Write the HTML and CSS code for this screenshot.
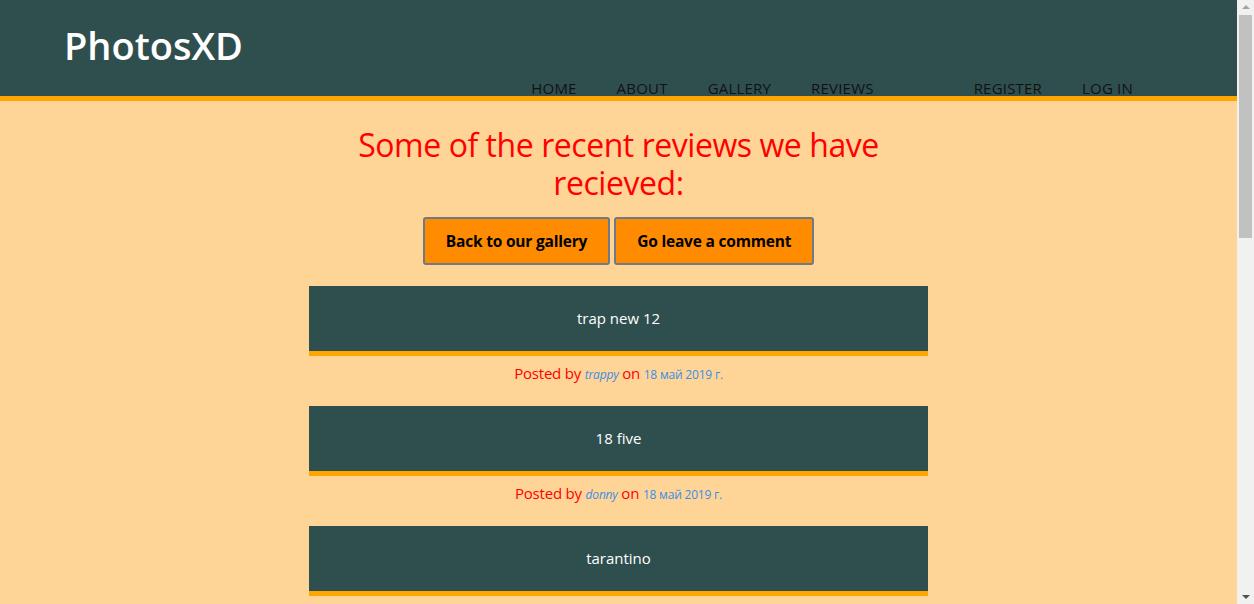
FILE: index.html
```html
<!DOCTYPE html>
<html lang="en">
<head>
<meta charset="utf-8">
<title>PhotosXD - Reviews</title>
<link rel="stylesheet" href="styles.css">
</head>
<body>
<div class="page">
  <header class="site-header">
    <div class="logo">PhotosXD</div>
    <nav class="nav">
      <ul class="nav-main">
        <li><a href="#">HOME</a></li>
        <li><a href="#">ABOUT</a></li>
        <li><a href="#">GALLERY</a></li>
        <li><a href="#">REVIEWS</a></li>
      </ul>
      <ul class="nav-user">
        <li><a href="#">REGISTER</a></li>
        <li><a href="#">LOG IN</a></li>
      </ul>
    </nav>
  </header>
  <main class="content">
    <h1 class="title">Some of the recent reviews we have recieved:</h1>
    <div class="actions">
      <a class="btn" href="#">Back to our gallery</a>
      <a class="btn" href="#">Go leave a comment</a>
    </div>
    <section class="reviews">
      <article class="review">
        <div class="review-body">trap new 12</div>
        <p class="meta">Posted by <em class="author">trappy</em> on <span class="date">18 май 2019 г.</span></p>
      </article>
      <article class="review">
        <div class="review-body">18 five</div>
        <p class="meta">Posted by <em class="author">donny</em> on <span class="date">18 май 2019 г.</span></p>
      </article>
      <article class="review">
        <div class="review-body">tarantino</div>
      </article>
    </section>
  </main>
</div>
<div class="scrollbar" aria-hidden="true">
  <div class="sb-arrow sb-up"></div>
  <div class="sb-thumb"></div>
  <div class="sb-arrow sb-down"></div>
</div>
</body>
</html>
```
FILE: styles.css
```css
html, body {
  margin: 0;
  padding: 0;
}
body {
  background: #ffd597;
  font-family: "Open Sans", "Noto Sans", sans-serif;
  color: #000;
}
.page {
  margin-right: 17px;
  min-height: 700px;
}
.site-header {
  background: #2f4f4f;
  border-bottom: 5px solid #ffa500;
  height: 96px;
  padding: 0 0 0 64px;
  display: flex;
  flex-direction: column;
  box-sizing: content-box;
}
.logo {
  color: #fff;
  font-size: 38px;
  font-weight: 600;
  line-height: 40px;
  margin-top: 25px;
}
.nav {
  display: flex;
  justify-content: flex-end;
  margin-top: auto;
  padding-right: 104px;
}
.nav ul {
  list-style: none;
  margin: 0;
  padding: 0;
  display: flex;
  gap: 40px;
}
.nav-user {
  margin-left: 100px !important;
}
.nav a {
  color: #111;
  text-decoration: none;
  font-size: 15px;
  line-height: 16px;
  letter-spacing: 0.2px;
  display: block;
}
.content {
  width: 619px;
  margin: 0 auto;
  text-align: center;
  padding-top: 25px;
}
.title {
  color: #ff0000;
  font-size: 32px;
  font-weight: 400;
  line-height: 38px;
  margin: 0 auto;
  width: 560px;
  letter-spacing: -0.45px;
}
.actions {
  margin-top: 15px;
  display: flex;
  justify-content: center;
  gap: 4px;
}
.btn {
  display: inline-block;
  background: #ff8c00;
  border: 2px solid #6e7a86;
  border-radius: 3px;
  color: #000;
  font-weight: 700;
  font-size: 15.5px;
  text-decoration: none;
  height: 44px;
  line-height: 44px;
  padding: 0 21px;
  letter-spacing: -0.2px;
}
.reviews {
  margin-top: 21px;
}
.review-body {
  background: #2f4f4f;
  border-bottom: 5px solid #ffa500;
  color: #fff;
  font-size: 15px;
  height: 65px;
  line-height: 65px;
}
.meta {
  margin: 0;
  height: 50px;
  line-height: 34px;
  color: #ff0000;
  font-size: 15px;
  letter-spacing: -0.2px;
}
.author {
  color: #3a8ee6;
  font-size: 12px;
}
.date {
  color: #3a8ee6;
  font-size: 12px;
}
/* window scrollbar, drawn over the right edge */
.scrollbar {
  position: fixed;
  top: 0;
  right: 0;
  width: 17px;
  height: 100%;
  background: #f1f1f1;
  display: flex;
  flex-direction: column;
  align-items: center;
}
.sb-arrow {
  width: 0;
  height: 0;
  border-left: 4px solid transparent;
  border-right: 4px solid transparent;
}
.sb-up {
  border-bottom: 4px solid #a3a3a3;
  margin-top: 5px;
}
.sb-down {
  border-top: 4px solid #505050;
  margin-top: auto;
  margin-bottom: 5px;
}
.sb-thumb {
  width: 13px;
  height: 223px;
  background: #c1c1c1;
  margin-top: 6px;
}
```
